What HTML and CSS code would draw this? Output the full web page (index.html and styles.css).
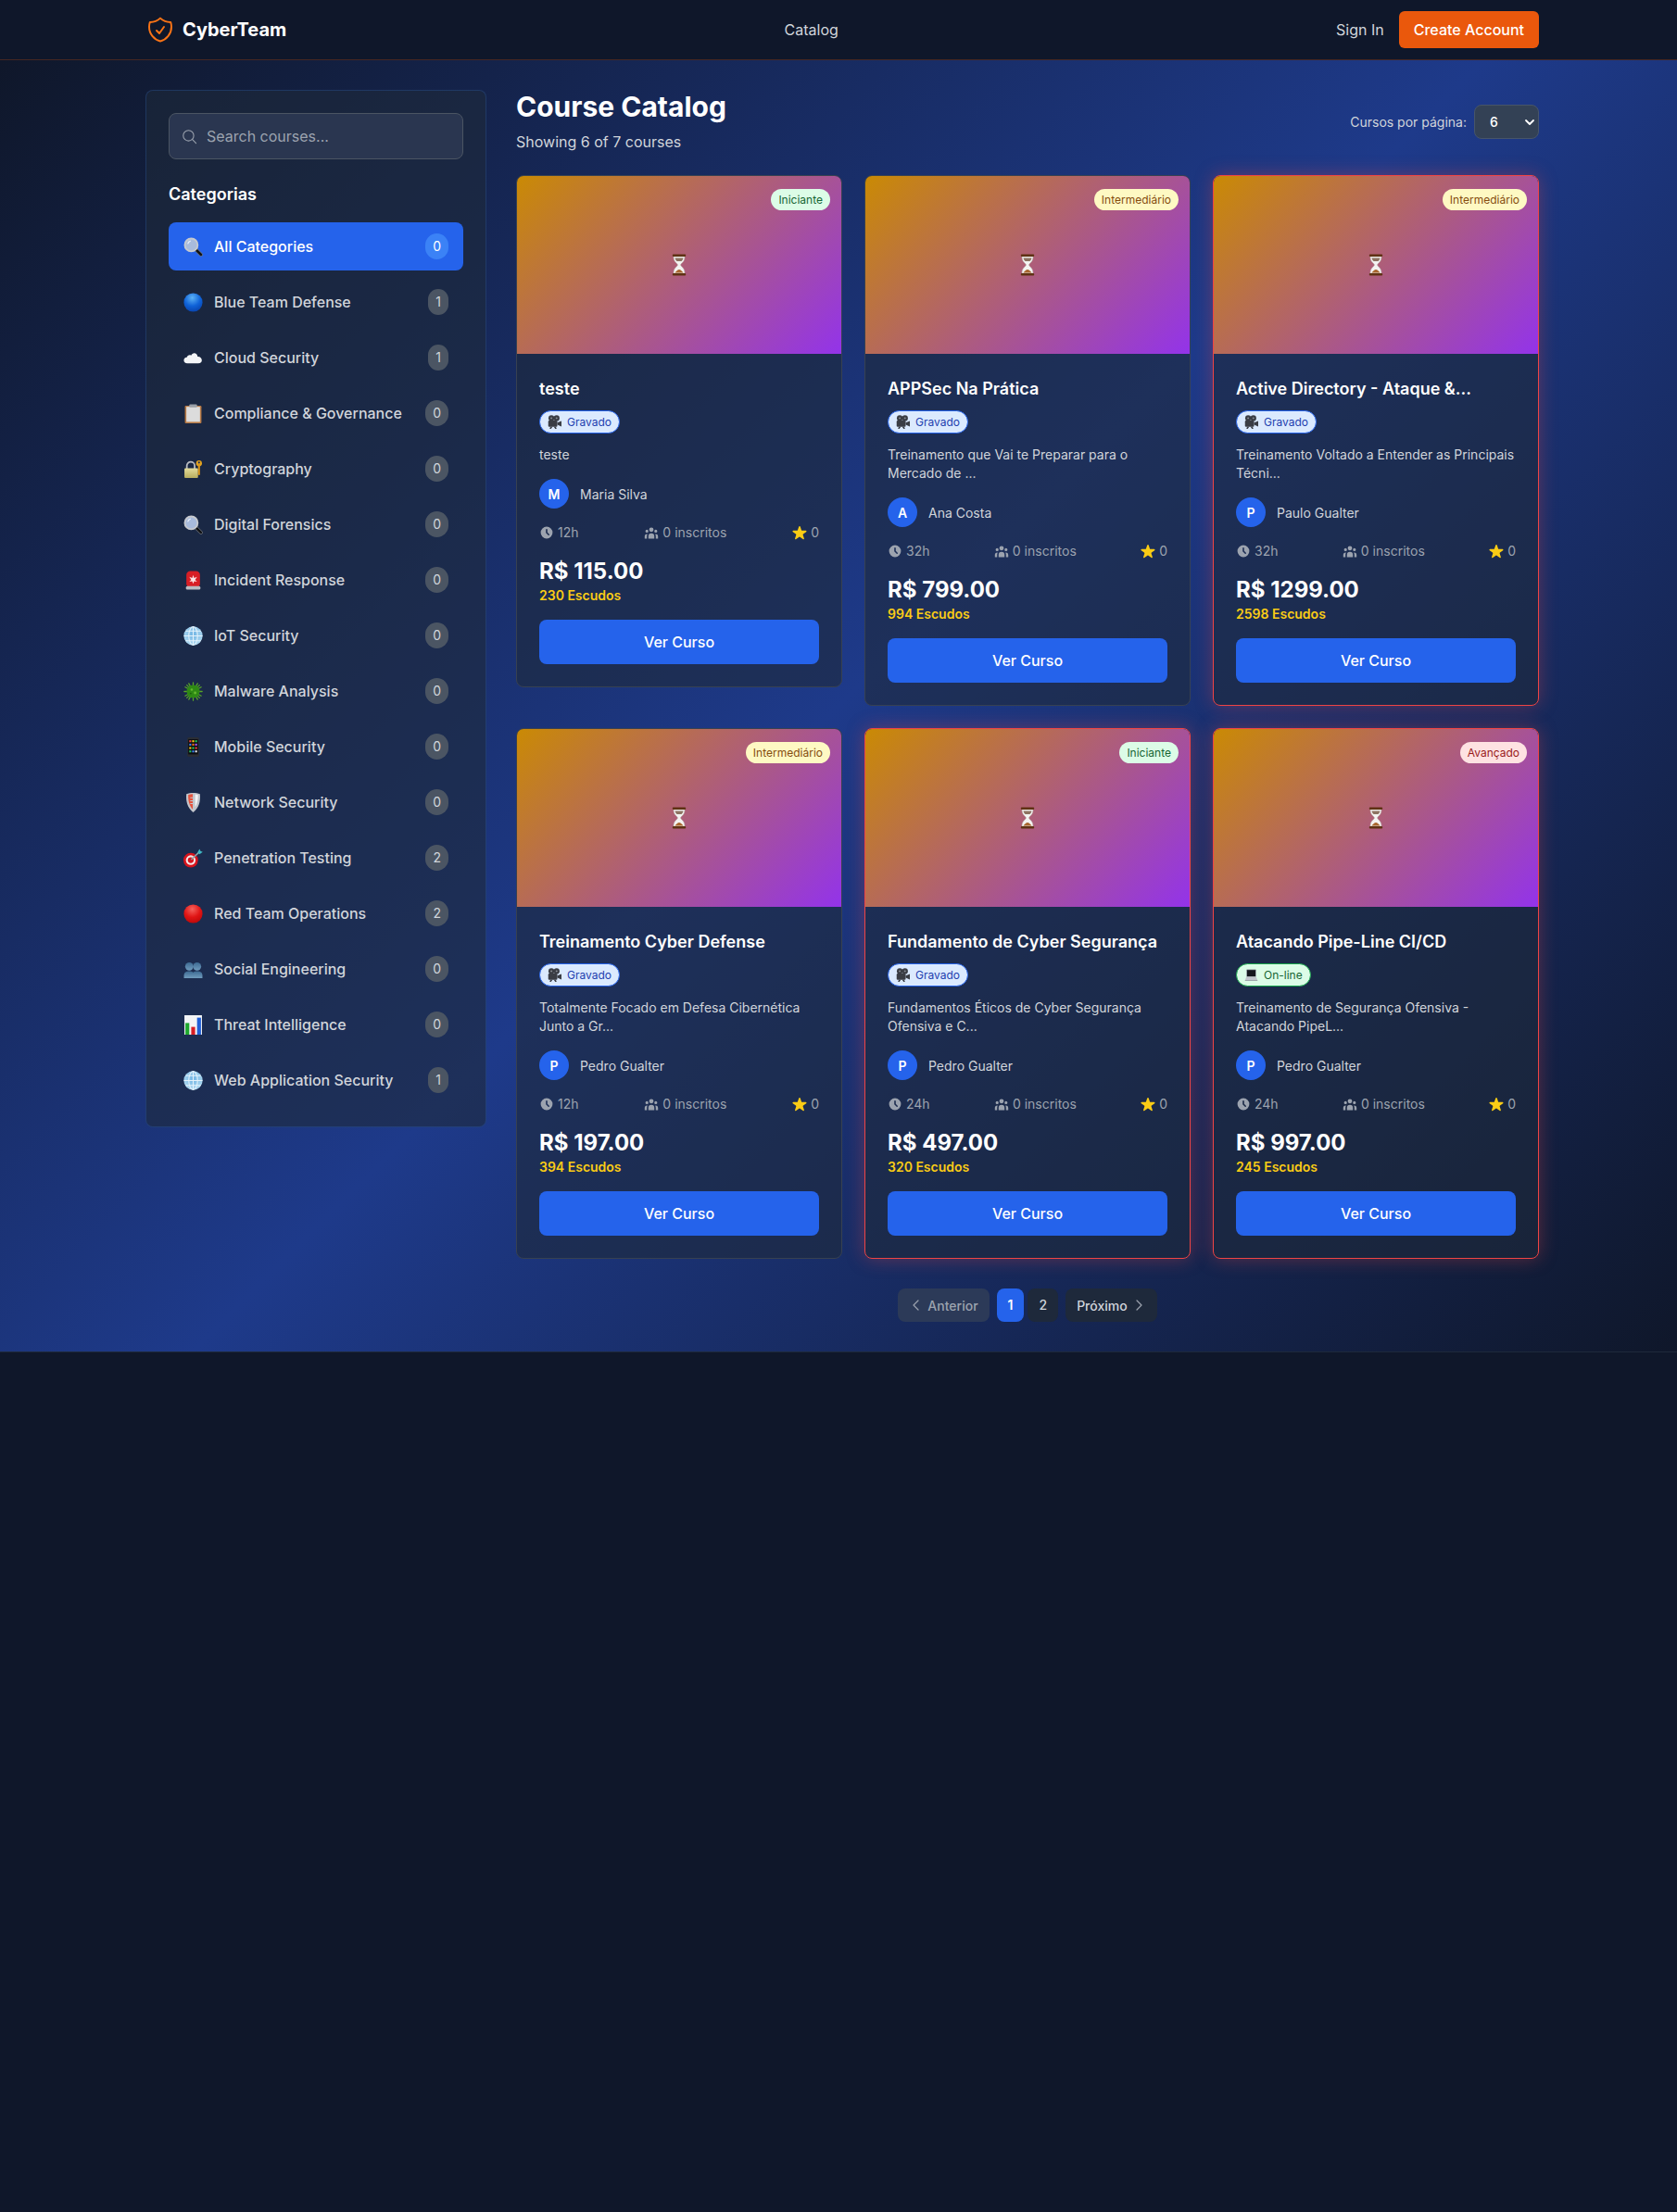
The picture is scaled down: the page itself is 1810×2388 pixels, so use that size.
FILE: index.html
```html
<!DOCTYPE html>
<html lang="en">
  <head>
    <meta charset="UTF-8" />
    <meta name="viewport" content="width=device-width, initial-scale=1.0" />
    <title>CyberTeam - Course Catalog</title>
    <link rel="stylesheet" href="styles.css">
  </head>
  <body>
    <svg class="sprite" aria-hidden="true">
      <defs>
        <radialGradient id="g-blue" cx="45%" cy="25%" r="80%"><stop offset="0" stop-color="#5cb2f5"/><stop offset="0.55" stop-color="#0f62d8"/><stop offset="1" stop-color="#0840a8"/></radialGradient>
        <radialGradient id="g-red" cx="45%" cy="25%" r="80%"><stop offset="0" stop-color="#f5625c"/><stop offset="0.55" stop-color="#e01414"/><stop offset="1" stop-color="#b80808"/></radialGradient>
        <radialGradient id="g-globe" cx="50%" cy="40%" r="65%"><stop offset="0" stop-color="#6fb4e4"/><stop offset="1" stop-color="#b5dcf2"/></radialGradient>
        <linearGradient id="g-bust" x1="0" y1="0" x2="0" y2="1"><stop offset="0" stop-color="#3d6a92"/><stop offset="1" stop-color="#6f9bbd"/></linearGradient>
        <linearGradient id="g-lock" x1="0" y1="0" x2="0" y2="1"><stop offset="0" stop-color="#e4dc9c"/><stop offset="1" stop-color="#b8ad5e"/></linearGradient>
      </defs>
      <symbol id="e-search" viewBox="0 0 20 20">
        <path d="M12 12l6 6" stroke="#6b7078" stroke-width="3.600" stroke-linecap="round"/>
        <path d="M12.500 12.500l5.500 5.500" stroke="#101216" stroke-width="2.400" stroke-linecap="round"/>
        <circle cx="8" cy="8" r="6.600" fill="#a8bbdc" stroke="#c6c9ce" stroke-width="1.800"/>
        <path d="M4.400 7a4 4 0 0 1 3-3" fill="none" stroke="#e6edf8" stroke-width="1.200"/>
      </symbol>
      <symbol id="e-blue" viewBox="0 0 20 20"><circle cx="10" cy="10" r="9.600" fill="url(#g-blue)"/></symbol>
      <symbol id="e-red" viewBox="0 0 20 20"><circle cx="10" cy="10" r="9.600" fill="url(#g-red)"/></symbol>
      <symbol id="e-cloud" viewBox="0 0 20 20">
        <path d="M4 15.500c-4.600 0-4.800-6-.5-6.300.5-2 2.700-2.900 4.400-1.900C9.200 3.800 14.200 4 14.600 8.600c5-.2 6.200 6.900.6 6.900z" fill="#f4f5f7"/>
      </symbol>
      <symbol id="e-clip" viewBox="0 0 20 20">
        <rect x="1.500" y="2" width="17" height="18" rx="1" fill="#b87a45"/>
        <rect x="3" y="3" width="14" height="15.500" fill="#dcdcdc"/>
        <rect x="6" y="0.500" width="8" height="3" rx="1" fill="#9aa0a8"/>
      </symbol>
      <symbol id="e-lock" viewBox="0 0 20 20">
        <path d="M3.500 10V6.500a4 4 0 0 1 8 0V10" fill="none" stroke="#b9bcc2" stroke-width="1.700"/>
        <rect x="1" y="9" width="14" height="10" rx="1" fill="url(#g-lock)"/>
        <circle cx="16" cy="4" r="3" fill="#e3a21f"/>
        <rect x="15" y="5" width="2" height="11" fill="#d8951a"/>
        <circle cx="16" cy="3.200" r="1" fill="#1b2b55"/>
      </symbol>
      <symbol id="e-alarm" viewBox="0 0 20 20">
        <rect x="3" y="0.500" width="14" height="17" rx="4" fill="#d81e25"/>
        <path d="M10 4.500l1 3 3-1-2 3 2 2-3-.5-1 2.500-1-2.500-3 .5 2-2-2-3 3 1z" fill="#fbe4e4"/>
        <rect x="2.500" y="16" width="15" height="3.500" rx="1.500" fill="#b9bcc2"/>
      </symbol>
      <symbol id="e-globe" viewBox="0 0 20 20">
        <circle cx="10" cy="10" r="9.700" fill="url(#g-globe)"/>
        <g fill="none" stroke="#e4f2fb" stroke-width="1">
          <ellipse cx="10" cy="10" rx="4.500" ry="9.500"/>
          <path d="M10 .5v19M.5 10h19M2 5h16M2 15h16"/>
        </g>
      </symbol>
      <symbol id="e-microbe" viewBox="0 0 20 20">
        <g stroke="#58a628" stroke-width="1.200" stroke-linecap="round">
          <path d="M10 .8v18.400M.8 10h18.400M3.500 3.500l13 13M16.500 3.500l-13 13M5.500 1.800l9 16.400M14.500 1.800l-9 16.400M1.800 5.500l16.400 9M18.200 5.500l-16.400 9"/>
        </g>
        <circle cx="10" cy="10" r="6.600" fill="#2e8a14"/>
        <circle cx="8.500" cy="8" r="1.200" fill="#63b82e"/>
        <circle cx="12" cy="11.500" r="1.400" fill="#63b82e"/>
        <circle cx="7.500" cy="12" r="0.900" fill="#1b6409"/>
      </symbol>
      <symbol id="e-phone" viewBox="0 0 20 20">
        <rect x="4" y="0" width="12" height="20" rx="1.500" fill="#2a2d33"/>
        <rect x="5" y="2" width="10" height="15.500" fill="#0c0d10"/>
        <g>
          <rect x="6" y="3" width="2" height="2" fill="#ef4444"/><rect x="9" y="3" width="2" height="2" fill="#facc15"/><rect x="12" y="3" width="2" height="2" fill="#22c55e"/>
          <rect x="6" y="6.500" width="2" height="2" fill="#3b82f6"/><rect x="9" y="6.500" width="2" height="2" fill="#f97316"/><rect x="12" y="6.500" width="2" height="2" fill="#a855f7"/>
          <rect x="6" y="10" width="2" height="2" fill="#facc15"/><rect x="9" y="10" width="2" height="2" fill="#22c55e"/><rect x="12" y="10" width="2" height="2" fill="#ef4444"/>
          <rect x="6" y="13.500" width="2" height="2" fill="#22c55e"/><rect x="9" y="13.500" width="2" height="2" fill="#3b82f6"/><rect x="12" y="13.500" width="2" height="2" fill="#e5e7eb"/>
        </g>
      </symbol>
      <symbol id="e-shield" viewBox="0 0 20 20">
        <path d="M10 0c2.500 0 5 .4 7 1.200 .6 7-.8 14-7 18.800C3.800 15.200 2.400 8.200 3 1.200 5 .4 7.500 0 10 0z" fill="#c3c6cc"/>
        <path d="M5 2c1.500-.5 3-.7 4.500-.7v15.500C6 13.500 4.600 8 5 2z" fill="#e5533d"/>
        <path d="M12 1.500c1 .1 2 .3 3 .6 .1 5-1 9.500-3 12.500z" fill="#f2f3f5"/>
        <path d="M7 5h3M7 8h3M7 11h3" stroke="#c3c6cc" stroke-width="1"/>
      </symbol>
      <symbol id="e-dart" viewBox="0 0 20 20">
        <circle cx="7.500" cy="12" r="7.500" fill="#d7141d"/>
        <circle cx="7.500" cy="12" r="5" fill="#f3e6e6"/>
        <circle cx="7.500" cy="12" r="3" fill="#d7141d"/>
        <path d="M8 11.500L17 3" stroke="#8ea4a8" stroke-width="1.400"/>
        <path d="M14.500 4l2-3.500 1 2.200 2.300.8-3.300 2.500z" fill="#3fb6c4"/>
      </symbol>
      <symbol id="e-busts" viewBox="0 0 20 20">
        <g fill="url(#g-bust)">
          <circle cx="6" cy="7" r="4.200"/><path d="M0.500 19v-2.500c0-3.500 2.500-4.500 5.500-4.500s5 1 5 4.500V19z"/>
          <circle cx="14" cy="7" r="4.200"/><path d="M9 19v-2.500c0-3.500 2-4.500 5-4.500s5.500 1 5.500 4.500V19z"/>
        </g>
      </symbol>
      <symbol id="e-chart" viewBox="0 0 20 20">
        <rect x="1" y="0" width="18" height="20" fill="#f3f5f7"/>
        <rect x="2" y="8" width="4" height="12" fill="#1fa82e"/>
        <rect x="8" y="12" width="4" height="8" fill="#d81e25"/>
        <rect x="14" y="2.500" width="4" height="17.500" fill="#1f5fd8"/>
      </symbol>
      <symbol id="e-hourglass" viewBox="0 0 16 24">
        <path d="M2 3h12c0 6-4 7-4.500 9 .5 2 4.500 3 4.500 9H2c0-6 4-7 4.500-9C6 10 2 9 2 3z" fill="#f4f3f1" stroke="#b8b2aa" stroke-width=".5"/>
        <path d="M3.500 4.500h9c-.3 1.500-1 2.500-2 3.500h-5c-1-1-1.700-2-2-3.500z" fill="#8d7361"/>
        <path d="M8 17c1.500 0 3.500 2 4.500 3.500h-9C4.500 19 6.500 17 8 17z" fill="#a8662e"/>
        <rect x="0.800" y="0.500" width="14.400" height="2.500" rx="1" fill="#5f3214"/>
        <rect x="0.800" y="21" width="14.400" height="2.500" rx="1" fill="#5f3214"/>
      </symbol>
      <symbol id="e-camera" viewBox="0 0 20 20">
        <g fill="#3a3d44">
          <circle cx="5.500" cy="4.500" r="4.200"/><circle cx="13" cy="4.500" r="4.200"/>
          <rect x="1" y="8" width="13" height="9" rx="1.500"/>
          <path d="M14 11l6-2.500v8L14 14z"/>
          <path d="M4 17h3l-2 3H3zM9 17h3l1 3h-2z"/>
        </g>
        <circle cx="5.500" cy="4.500" r="1.300" fill="#8a8e96"/><circle cx="13" cy="4.500" r="1.300" fill="#8a8e96"/>
      </symbol>
      <symbol id="e-laptop" viewBox="0 0 20 20">
        <rect x="3" y="2" width="14" height="11" rx="1" fill="#8a8f98"/>
        <rect x="4" y="3" width="12" height="9" fill="#16181d"/>
        <path d="M3 13h14l2 4.500H1z" fill="#c2c6cc"/>
        <rect x="1" y="17.500" width="18" height="1" fill="#8a8f98"/>
      </symbol>
      <symbol id="i-clock" viewBox="0 0 20 20">
        <path fill-rule="evenodd" d="M10 18a8 8 0 1 0 0-16 8 8 0 0 0 0 16zm1-12a1 1 0 1 0-2 0v4c0 .3.1.5.3.7l2.800 2.800a1 1 0 0 0 1.400-1.400L11 9.600z" clip-rule="evenodd"/>
      </symbol>
      <symbol id="i-users" viewBox="0 0 20 20">
        <path d="M13 6a3 3 0 1 1-6 0 3 3 0 0 1 6 0zM18 8a2 2 0 1 1-4 0 2 2 0 0 1 4 0zM14 15a4 4 0 0 0-8 0v3h8v-3zM6 8a2 2 0 1 1-4 0 2 2 0 0 1 4 0zM16 18v-3a6 6 0 0 0-.750-2.900A3 3 0 0 1 19 15v3h-3zM4.750 12.100A6 6 0 0 0 4 15v3H1v-3a3 3 0 0 1 3.750-2.900z"/>
      </symbol>
      <symbol id="i-star" viewBox="0 0 20 20">
        <path transform="translate(0 -1)" d="M9.050 2.900c.3-.9 1.600-.9 1.900 0l1.500 4.700a1 1 0 0 0 1 .7h4.900c1 0 1.400 1.300.6 1.800l-4 2.900a1 1 0 0 0-.4 1.100l1.500 4.700c.3.900-.8 1.700-1.500 1.100l-4-2.900a1 1 0 0 0-1.200 0l-4 2.900c-.8.600-1.800-.2-1.500-1.100l1.500-4.700a1 1 0 0 0-.4-1.100l-4-2.900c-.8-.5-.4-1.800.6-1.800h4.900a1 1 0 0 0 1-.7z"/>
      </symbol>
    </svg>

    <nav class="topbar">
      <a class="brand" href="#">
        <svg class="brand-icon" viewBox="0 0 24 24" fill="none" stroke="currentColor" stroke-width="1.500" stroke-linecap="round" stroke-linejoin="round"><path d="M9 12.750 11.250 15 15 9.750m-3-7.036A11.959 11.959 0 0 1 3.598 6 11.990 11.990 0 0 0 3 9.749c0 5.592 3.824 10.290 9 11.623 5.176-1.332 9-6.030 9-11.622 0-1.310-.210-2.571-.598-3.751h-.152c-3.196 0-6.100-1.248-8.250-3.285Z"/></svg>
        <span>CyberTeam</span>
      </a>
      <a class="nav-link" href="#">Catalog</a>
      <div class="nav-actions">
        <a class="nav-link" href="#">Sign In</a>
        <a class="btn-signup" href="#">Create Account</a>
      </div>
    </nav>

    <main class="page">
      <div class="layout">
        <aside class="sidebar">
          <div class="search-box">
            <svg class="search-icon" viewBox="0 0 24 24" fill="none" stroke="currentColor" stroke-width="1.500" stroke-linecap="round"><circle cx="10.500" cy="10.500" r="8"/><path d="M16.500 16.500 22 22"/></svg>
            <span class="search-text">Search courses...</span>
          </div>
          <h3 class="side-title">Categorias</h3>
          <ul class="cat-list">
            <li class="cat-item active"><svg class="cat-emoji"><use href="#e-search"/></svg><span class="cat-name">All Categories</span><span class="cat-count">0</span></li>
            <li class="cat-item"><svg class="cat-emoji"><use href="#e-blue"/></svg><span class="cat-name">Blue Team Defense</span><span class="cat-count">1</span></li>
            <li class="cat-item"><svg class="cat-emoji"><use href="#e-cloud"/></svg><span class="cat-name">Cloud Security</span><span class="cat-count">1</span></li>
            <li class="cat-item"><svg class="cat-emoji"><use href="#e-clip"/></svg><span class="cat-name">Compliance &amp; Governance</span><span class="cat-count">0</span></li>
            <li class="cat-item"><svg class="cat-emoji"><use href="#e-lock"/></svg><span class="cat-name">Cryptography</span><span class="cat-count">0</span></li>
            <li class="cat-item"><svg class="cat-emoji"><use href="#e-search"/></svg><span class="cat-name">Digital Forensics</span><span class="cat-count">0</span></li>
            <li class="cat-item"><svg class="cat-emoji"><use href="#e-alarm"/></svg><span class="cat-name">Incident Response</span><span class="cat-count">0</span></li>
            <li class="cat-item"><svg class="cat-emoji"><use href="#e-globe"/></svg><span class="cat-name">IoT Security</span><span class="cat-count">0</span></li>
            <li class="cat-item"><svg class="cat-emoji"><use href="#e-microbe"/></svg><span class="cat-name">Malware Analysis</span><span class="cat-count">0</span></li>
            <li class="cat-item"><svg class="cat-emoji"><use href="#e-phone"/></svg><span class="cat-name">Mobile Security</span><span class="cat-count">0</span></li>
            <li class="cat-item"><svg class="cat-emoji"><use href="#e-shield"/></svg><span class="cat-name">Network Security</span><span class="cat-count">0</span></li>
            <li class="cat-item"><svg class="cat-emoji"><use href="#e-dart"/></svg><span class="cat-name">Penetration Testing</span><span class="cat-count">2</span></li>
            <li class="cat-item"><svg class="cat-emoji"><use href="#e-red"/></svg><span class="cat-name">Red Team Operations</span><span class="cat-count">2</span></li>
            <li class="cat-item"><svg class="cat-emoji"><use href="#e-busts"/></svg><span class="cat-name">Social Engineering</span><span class="cat-count">0</span></li>
            <li class="cat-item"><svg class="cat-emoji"><use href="#e-chart"/></svg><span class="cat-name">Threat Intelligence</span><span class="cat-count">0</span></li>
            <li class="cat-item"><svg class="cat-emoji"><use href="#e-globe"/></svg><span class="cat-name">Web Application Security</span><span class="cat-count">1</span></li>
          </ul>
        </aside>

        <section class="catalog">
          <header class="catalog-head">
            <div>
              <h1 class="catalog-title">Course Catalog</h1>
              <p class="catalog-sub">Showing 6 of 7 courses</p>
            </div>
            <div class="per-page">
              <label for="per-page-select">Cursos por página:</label>
              <div class="select-wrap">
                <select id="per-page-select"><option>6</option><option>12</option><option>24</option></select>
                <svg class="select-arrow" viewBox="0 0 12 12" fill="none" stroke="currentColor" stroke-width="1.800" stroke-linecap="round" stroke-linejoin="round"><path d="M2 4l4 4 4-4"/></svg>
              </div>
            </div>
          </header>

          <div class="course-grid">
            <article class="course-card">
              <div class="course-thumb">
                <svg class="thumb-emoji"><use href="#e-hourglass"/></svg>
                <span class="level level-easy">Iniciante</span>
              </div>
              <div class="course-body">
                <h3 class="course-title">teste</h3>
                <span class="mode mode-rec"><svg class="mode-emoji"><use href="#e-camera"/></svg>Gravado</span>
                <p class="course-desc">teste</p>
                <div class="teacher"><span class="avatar">M</span><span>Maria Silva</span></div>
                <div class="meta">
                  <span class="meta-item"><svg class="meta-icon"><use href="#i-clock"/></svg>12h</span>
                  <span class="meta-item"><svg class="meta-icon"><use href="#i-users"/></svg>0 inscritos</span>
                  <span class="meta-item"><svg class="meta-icon star"><use href="#i-star"/></svg>0</span>
                </div>
                <div class="price">R$ 115.00</div>
                <div class="coins">230 Escudos</div>
                <a class="btn-course" href="#">Ver Curso</a>
              </div>
            </article>

            <article class="course-card">
              <div class="course-thumb">
                <svg class="thumb-emoji"><use href="#e-hourglass"/></svg>
                <span class="level level-mid">Intermediário</span>
              </div>
              <div class="course-body">
                <h3 class="course-title">APPSec Na Prática</h3>
                <span class="mode mode-rec"><svg class="mode-emoji"><use href="#e-camera"/></svg>Gravado</span>
                <p class="course-desc">Treinamento que Vai te Preparar para o Mercado de ...</p>
                <div class="teacher"><span class="avatar">A</span><span>Ana Costa</span></div>
                <div class="meta">
                  <span class="meta-item"><svg class="meta-icon"><use href="#i-clock"/></svg>32h</span>
                  <span class="meta-item"><svg class="meta-icon"><use href="#i-users"/></svg>0 inscritos</span>
                  <span class="meta-item"><svg class="meta-icon star"><use href="#i-star"/></svg>0</span>
                </div>
                <div class="price">R$ 799.00</div>
                <div class="coins">994 Escudos</div>
                <a class="btn-course" href="#">Ver Curso</a>
              </div>
            </article>

            <article class="course-card featured">
              <div class="course-thumb">
                <svg class="thumb-emoji"><use href="#e-hourglass"/></svg>
                <span class="level level-mid">Intermediário</span>
              </div>
              <div class="course-body">
                <h3 class="course-title">Active Directory - Ataque &amp;...</h3>
                <span class="mode mode-rec"><svg class="mode-emoji"><use href="#e-camera"/></svg>Gravado</span>
                <p class="course-desc">Treinamento Voltado a Entender as Principais Técni...</p>
                <div class="teacher"><span class="avatar">P</span><span>Paulo Gualter</span></div>
                <div class="meta">
                  <span class="meta-item"><svg class="meta-icon"><use href="#i-clock"/></svg>32h</span>
                  <span class="meta-item"><svg class="meta-icon"><use href="#i-users"/></svg>0 inscritos</span>
                  <span class="meta-item"><svg class="meta-icon star"><use href="#i-star"/></svg>0</span>
                </div>
                <div class="price">R$ 1299.00</div>
                <div class="coins">2598 Escudos</div>
                <a class="btn-course" href="#">Ver Curso</a>
              </div>
            </article>

            <article class="course-card">
              <div class="course-thumb">
                <svg class="thumb-emoji"><use href="#e-hourglass"/></svg>
                <span class="level level-mid">Intermediário</span>
              </div>
              <div class="course-body">
                <h3 class="course-title">Treinamento Cyber Defense</h3>
                <span class="mode mode-rec"><svg class="mode-emoji"><use href="#e-camera"/></svg>Gravado</span>
                <p class="course-desc">Totalmente Focado em Defesa Cibernética Junto a Gr...</p>
                <div class="teacher"><span class="avatar">P</span><span>Pedro Gualter</span></div>
                <div class="meta">
                  <span class="meta-item"><svg class="meta-icon"><use href="#i-clock"/></svg>12h</span>
                  <span class="meta-item"><svg class="meta-icon"><use href="#i-users"/></svg>0 inscritos</span>
                  <span class="meta-item"><svg class="meta-icon star"><use href="#i-star"/></svg>0</span>
                </div>
                <div class="price">R$ 197.00</div>
                <div class="coins">394 Escudos</div>
                <a class="btn-course" href="#">Ver Curso</a>
              </div>
            </article>

            <article class="course-card featured">
              <div class="course-thumb">
                <svg class="thumb-emoji"><use href="#e-hourglass"/></svg>
                <span class="level level-easy">Iniciante</span>
              </div>
              <div class="course-body">
                <h3 class="course-title">Fundamento de Cyber Segurança</h3>
                <span class="mode mode-rec"><svg class="mode-emoji"><use href="#e-camera"/></svg>Gravado</span>
                <p class="course-desc">Fundamentos Éticos de Cyber Segurança Ofensiva e C...</p>
                <div class="teacher"><span class="avatar">P</span><span>Pedro Gualter</span></div>
                <div class="meta">
                  <span class="meta-item"><svg class="meta-icon"><use href="#i-clock"/></svg>24h</span>
                  <span class="meta-item"><svg class="meta-icon"><use href="#i-users"/></svg>0 inscritos</span>
                  <span class="meta-item"><svg class="meta-icon star"><use href="#i-star"/></svg>0</span>
                </div>
                <div class="price">R$ 497.00</div>
                <div class="coins">320 Escudos</div>
                <a class="btn-course" href="#">Ver Curso</a>
              </div>
            </article>

            <article class="course-card featured">
              <div class="course-thumb">
                <svg class="thumb-emoji"><use href="#e-hourglass"/></svg>
                <span class="level level-hard">Avançado</span>
              </div>
              <div class="course-body">
                <h3 class="course-title">Atacando Pipe-Line CI/CD</h3>
                <span class="mode mode-live"><svg class="mode-emoji"><use href="#e-laptop"/></svg>On-line</span>
                <p class="course-desc">Treinamento de Segurança Ofensiva - Atacando PipeL...</p>
                <div class="teacher"><span class="avatar">P</span><span>Pedro Gualter</span></div>
                <div class="meta">
                  <span class="meta-item"><svg class="meta-icon"><use href="#i-clock"/></svg>24h</span>
                  <span class="meta-item"><svg class="meta-icon"><use href="#i-users"/></svg>0 inscritos</span>
                  <span class="meta-item"><svg class="meta-icon star"><use href="#i-star"/></svg>0</span>
                </div>
                <div class="price">R$ 997.00</div>
                <div class="coins">245 Escudos</div>
                <a class="btn-course" href="#">Ver Curso</a>
              </div>
            </article>
          </div>

          <div class="pager">
            <span class="pager-btn disabled"><svg class="pager-arrow" viewBox="0 0 16 16" fill="none" stroke="currentColor" stroke-width="1.200" stroke-linecap="round" stroke-linejoin="round"><path d="M10 3L5 8l5 5"/></svg>Anterior</span>
            <div class="pager-pages">
              <span class="pager-num current">1</span>
              <span class="pager-num">2</span>
            </div>
            <span class="pager-btn">Próximo<svg class="pager-arrow" viewBox="0 0 16 16" fill="none" stroke="currentColor" stroke-width="1.200" stroke-linecap="round" stroke-linejoin="round"><path d="M6 3l5 5-5 5"/></svg></span>
          </div>
        </section>
      </div>
    </main>
    <footer class="foot"></footer>
  </body>
</html>
```

FILE: styles.css
```css
* {
  box-sizing: border-box;
}
html, body {
  margin: 0;
  padding: 0;
}
body {
  min-height: 2388px;
  background-color: #0f172a;
  font-family: "Inter", "Liberation Sans", sans-serif;
  font-size: 16px;
  color: #fff;
}
a {
  color: inherit;
  text-decoration: none;
}
.sprite {
  display: block;
  width: 0;
  height: 0;
}

/* top bar */
.topbar {
  display: flex;
  align-items: center;
  justify-content: space-between;
  height: 65px;
  padding: 0 149px 0 157px;
  background-color: #0f172a;
  border-bottom: 1px solid rgba(234, 88, 12, 0.25);
}
.brand {
  display: flex;
  align-items: center;
  gap: 8px;
  font-size: 20px;
  font-weight: 700;
}
.brand-icon {
  width: 32px;
  height: 32px;
  color: #f97316;
}
.nav-link {
  font-size: 16px;
  color: #d1d5db;
}
.nav-actions {
  display: flex;
  align-items: center;
  gap: 16px;
}
.btn-signup {
  padding: 8px 16px;
  height: 40px;
  line-height: 24px;
  font-weight: 500;
  background-color: #ea580c;
  border-radius: 6px;
}

/* page */
.page {
  padding: 32px 149px 32px 157px;
  background: linear-gradient(135deg, #0f172a 0%, #1e3a8a 50%, #0f172a 100%);
}
.layout {
  display: flex;
  align-items: flex-start;
  gap: 32px;
}
.foot {
  height: 1px;
  background-color: #1e293b;
}

/* sidebar */
.sidebar {
  flex: 0 0 368px;
  padding: 24px;
  background-color: rgba(30, 41, 59, 0.6);
  border: 1px solid rgba(59, 130, 246, 0.2);
  border-radius: 8px;
}
.search-box {
  display: flex;
  align-items: center;
  gap: 10px;
  height: 50px;
  padding: 0 13px;
  background-color: #2a3650;
  border: 1px solid #4b5563;
  border-radius: 8px;
}
.search-icon {
  width: 17px;
  height: 17px;
  color: #9ca3af;
}
.search-text {
  color: #9ca3af;
}
.side-title {
  margin: 24px 0 16px;
  font-size: 18px;
  line-height: 28px;
  font-weight: 600;
}
.cat-list {
  display: flex;
  flex-direction: column;
  gap: 8px;
  margin: 0;
  padding: 0;
  list-style: none;
}
.cat-item {
  display: flex;
  align-items: center;
  height: 52px;
  padding: 0 16px;
  color: #d1d5db;
  border-radius: 8px;
}
.cat-item.active {
  color: #fff;
  background-color: #2563eb;
}
.cat-emoji {
  flex: none;
  width: 21px;
  height: 21px;
  margin-right: 12px;
}
.cat-name {
  flex: 1;
  font-size: 16px;
  font-weight: 500;
}
.cat-count {
  padding: 4px 8px;
  font-size: 14px;
  line-height: 20px;
  color: #d1d5db;
  background-color: #4b5563;
  border-radius: 999px;
}
.active .cat-count {
  color: #fff;
  background-color: #3b82f6;
}

/* catalog head */
.catalog {
  flex: 1;
  min-width: 0;
}
.catalog-head {
  display: flex;
  align-items: center;
  justify-content: space-between;
  margin-bottom: 24px;
}
.catalog-title {
  margin: 0 0 8px;
  font-size: 30px;
  line-height: 36px;
  font-weight: 700;
}
.catalog-sub {
  margin: 0;
  line-height: 24px;
  color: #d1d5db;
}
.per-page {
  display: flex;
  align-items: center;
  gap: 8px;
  font-size: 14px;
  color: #d1d5db;
}
.select-wrap {
  position: relative;
  width: 70px;
}
.select-wrap select {
  display: block;
  width: 100%;
  height: 37px;
  padding: 0 16px;
  font-family: inherit;
  font-size: 14px;
  font-weight: 500;
  color: #fff;
  background-color: #334155;
  border: 1px solid #475569;
  border-radius: 8px;
  appearance: none;
}
.select-arrow {
  position: absolute;
  top: 13px;
  right: 4px;
  width: 12px;
  height: 12px;
  color: #fff;
  pointer-events: none;
}

/* cards */
.course-grid {
  display: grid;
  grid-template-columns: repeat(3, 1fr);
  align-items: start;
  gap: 24px;
}
.course-card {
  overflow: hidden;
  background-color: rgba(30, 41, 59, 0.6);
  border: 1px solid #374151;
  border-radius: 8px;
}
.course-card.featured {
  border-color: #ef4444;
  box-shadow: 0 0 20px rgba(239, 68, 68, 0.35);
}
.course-thumb {
  position: relative;
  display: flex;
  align-items: center;
  justify-content: center;
  height: 192px;
  background: linear-gradient(135deg, #ca8a04, #9333ea);
}
.thumb-emoji {
  width: 16px;
  height: 24px;
}
.level {
  position: absolute;
  top: 14px;
  right: 12px;
  padding: 4px 8px;
  font-size: 12px;
  line-height: 15px;
  border-radius: 999px;
}
.level-easy {
  color: #166534;
  background-color: #dcfce7;
}
.level-mid {
  color: #854d0e;
  background-color: #fef9c3;
}
.level-hard {
  color: #991b1b;
  background-color: #fee2e2;
}
.course-body {
  padding: 24px;
}
.course-title {
  margin: 0 0 9px;
  font-size: 18px;
  line-height: 28px;
  font-weight: 600;
}
.mode {
  display: inline-flex;
  align-items: center;
  gap: 6px;
  height: 25px;
  padding: 0 8px;
  font-size: 12px;
  border: 1px solid;
  border-radius: 999px;
  vertical-align: top;
}
.mode-rec {
  color: #1e40af;
  background-color: #dbeafe;
  border-color: #2563eb;
}
.mode-live {
  color: #166534;
  background-color: #dcfce7;
  border-color: #16a34a;
}
.mode-emoji {
  width: 15px;
  height: 15px;
}
.course-desc {
  margin: 13px 0 16px;
  font-size: 14px;
  line-height: 20px;
  color: #d1d5db;
}
.teacher {
  display: flex;
  align-items: center;
  gap: 12px;
  margin-bottom: 16px;
  font-size: 14px;
  color: #d1d5db;
}
.avatar {
  display: flex;
  align-items: center;
  justify-content: center;
  width: 32px;
  height: 32px;
  font-weight: 600;
  color: #fff;
  background-color: #2563eb;
  border-radius: 50%;
}
.meta {
  display: flex;
  justify-content: space-between;
  margin-bottom: 16px;
  font-size: 14px;
  line-height: 20px;
  color: #9ca3af;
}
.meta-item {
  display: flex;
  align-items: center;
  gap: 4px;
}
.meta-icon {
  width: 16px;
  height: 16px;
  fill: currentColor;
}
.meta-icon.star {
  fill: #facc15;
}
.price {
  font-size: 24px;
  line-height: 32px;
  font-weight: 700;
}
.coins {
  margin-bottom: 16px;
  font-size: 14px;
  line-height: 20px;
  font-weight: 600;
  color: #facc15;
}
.btn-course {
  display: block;
  height: 48px;
  line-height: 48px;
  text-align: center;
  font-weight: 500;
  background-color: #2563eb;
  border-radius: 8px;
}

/* pagination */
.pager {
  display: flex;
  justify-content: center;
  gap: 8px;
  margin-top: 32px;
  font-size: 14px;
  font-weight: 500;
}
.pager-btn {
  display: flex;
  align-items: center;
  gap: 4px;
  height: 36px;
  padding: 0 12px;
  color: #d1d5db;
  background-color: #1e293b;
  border-radius: 8px;
}
.pager-btn.disabled {
  color: #9ca3af;
  background-color: #2c3a58;
}
.pager-arrow {
  width: 16px;
  height: 16px;
  color: #9ca3af;
}
.pager-pages {
  display: flex;
  gap: 4px;
}
.pager-num {
  height: 36px;
  padding: 0 12px;
  line-height: 36px;
  color: #d1d5db;
  background-color: #1e293b;
  border-radius: 8px;
}
.pager-num.current {
  color: #fff;
  font-weight: 600;
  background-color: #2563eb;
}
```
